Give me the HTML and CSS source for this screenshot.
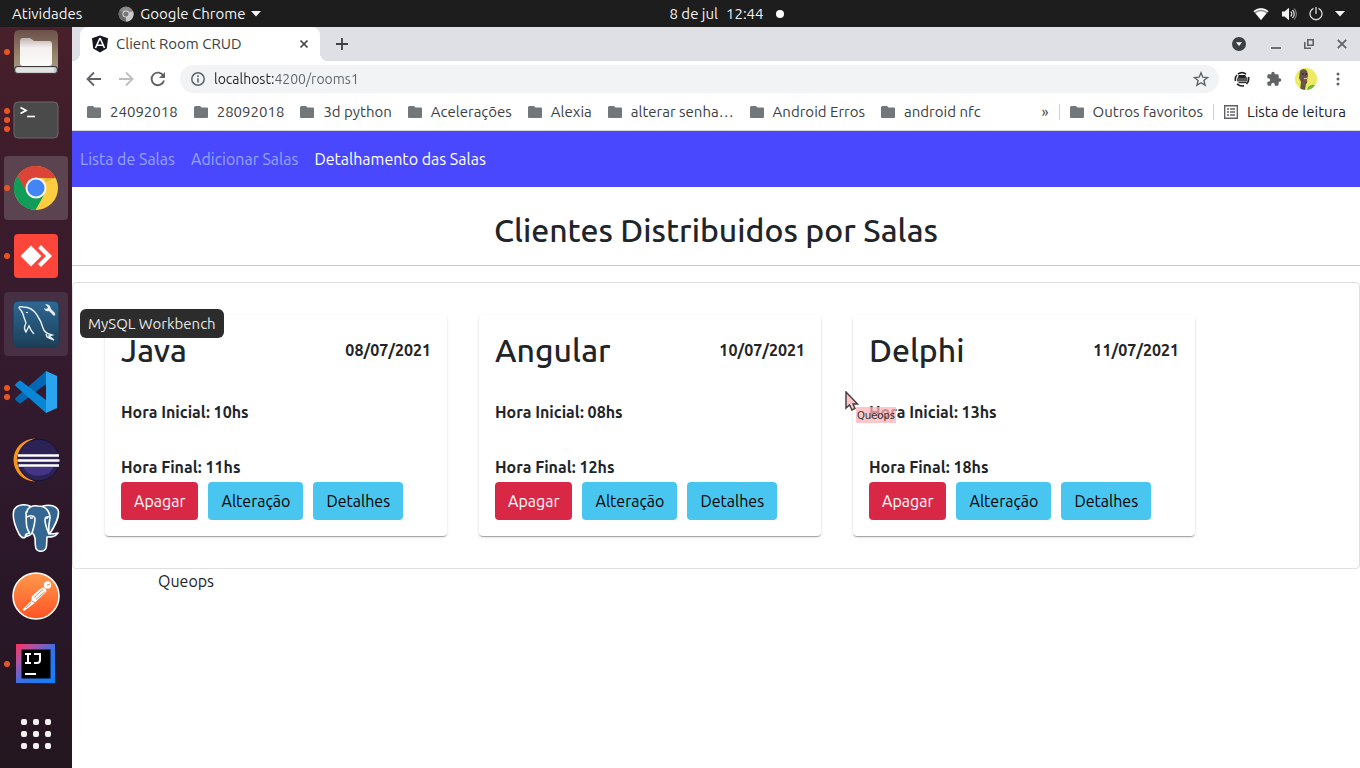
FILE: index.html
```html
<!DOCTYPE html>
<html lang="pt-BR">
<head>
<meta charset="utf-8">
<title>Client Room CRUD</title>
<link rel="stylesheet" href="styles.css">
</head>
<body>
<div class="desktop">
  <header class="topbar">
    <div class="topbar-left">
      <button class="bar-btn">Atividades</button>
      <button class="bar-btn app-menu">
        <svg width="16" height="16" viewBox="0 0 16 16"><circle cx="8" cy="8" r="7.5" fill="#8a8a8a"/><path d="M8 8 15 5A7.5 7.5 0 0 1 8 15.500z" fill="#c9c9c9"/><path d="M8 8 1.500 4.500A7.500 7.500 0 0 0 7.500 15.500z" fill="#6a6a6a"/><circle cx="8" cy="8" r="3.600" fill="#ddd"/><circle cx="8" cy="8" r="2.600" fill="#777"/></svg>
        Google Chrome
        <svg width="10" height="6" viewBox="0 0 10 6"><path d="M0 0h10L5 5.500z" fill="#f2f2f2"/></svg>
      </button>
    </div>
    <button class="bar-btn clock"><span>8 de jul</span><span>12:44</span><i class="clock-dot"></i></button>
    <button class="bar-btn tray" aria-label="Sistema">
      <svg width="16" height="14" viewBox="0 0 16 14"><path d="M.5 4.200C4.600.2 11.400.2 15.500 4.200L8 13z" fill="#8f8f8f"/><path d="M.5 4.200C4.600.2 11.400.2 15.500 4.200l-.8 1C10.800 1.800 5.200 1.800 1.300 5.200z" fill="#fff"/><path d="M2.600 6.200C5.600 3.500 10.400 3.500 13.400 6.200L8 13z" fill="#fff"/></svg>
      <svg width="16" height="14" viewBox="0 0 16 14"><path d="M1 4.500h2.500L8 .8v12.400L3.500 9.500H1z" fill="#f2f2f2"/><path d="M9.800 4.500q2 2.500 0 5M11.500 2.800q3.400 4.200 0 8.400" fill="none" stroke="#e0e0e0" stroke-width="1.200"/><path d="M13.200 1.500q4.400 5.500 0 11" fill="none" stroke="#888" stroke-width="1.100"/></svg>
      <svg width="14" height="14" viewBox="0 0 14 14"><path d="M4.500 1.300a6 6 0 1 0 5 0M7 0v7" fill="none" stroke="#d8d8d8" stroke-width="1.300"/></svg>
      <svg width="10" height="6" viewBox="0 0 10 6"><path d="M0 0h10L5 5.500z" fill="#f2f2f2"/></svg>
    </button>
  </header>

  <div class="workspace">
    <nav class="dock" aria-label="Dock">
      <button class="dock-item" aria-label="Arquivos"><span class="dots"><i></i></span>
        <svg width="48" height="48" viewBox="0 0 48 48"><defs><linearGradient id="fg" x1="0" y1="0" x2="0" y2="1"><stop offset="0" stop-color="#6b5049"/><stop offset=".6" stop-color="#98866f"/><stop offset="1" stop-color="#aaa085"/></linearGradient><linearGradient id="ff" x1="0" y1="0" x2="0" y2="1"><stop offset="0" stop-color="#bfb2b0"/><stop offset=".35" stop-color="#f4f1f0"/><stop offset="1" stop-color="#fbfbfa"/></linearGradient></defs><rect x="2" y="2" width="44" height="44" rx="5" fill="url(#fg)"/><path d="M8 13q0-3 3-3h7l4 3h15q3 0 3 3v19q0 3-3 3H11q-3 0-3-3z" fill="url(#ff)"/><rect x="2.500" y="38.500" width="43" height="7" rx="3.500" fill="#c9c9c9" stroke="#3c3837" stroke-width="1.200"/><rect x="4" y="39.500" width="38" height="4.500" rx="2" fill="#e2e2e2"/></svg></button>
      <button class="dock-item" aria-label="Terminal"><span class="dots"><i></i><i></i><i></i></span>
        <svg width="48" height="48" viewBox="0 0 48 48"><rect x="2" y="6" width="44" height="36" rx="4" fill="#4a4a4a" stroke="#6d6768"/><path d="M8.500 11.500 14 14.500 8.500 17.500" fill="none" stroke="#fff" stroke-width="1.800"/><path d="M15 20.500h8" stroke="#fff" stroke-width="1.600"/></svg></button>
      <button class="dock-item active" aria-label="Google Chrome"><span class="dots"><i></i></span>
        <svg width="48" height="48" viewBox="0 0 48 48"><circle cx="24" cy="24" r="22" fill="#ffcd40"/><path d="M24 24 5.500 12A22 22 0 0 0 23.500 46L32 31z" fill="#0f9d58"/><path d="M24 14H43.700A22 22 0 0 0 5.500 12L15 28.500z" fill="#db4437"/><path d="M32 14h11.700L34 18z" fill="#c98a2c" opacity=".4"/><circle cx="24" cy="24" r="10.500" fill="#f4f4f4"/><circle cx="24" cy="24" r="8.500" fill="#4285f4"/></svg></button>
      <button class="dock-item" aria-label="AnyDesk"><span class="dots"><i></i></span>
        <svg width="48" height="48" viewBox="0 0 48 48"><rect x="2" y="2" width="44" height="44" rx="4" fill="#fd453a"/><path d="M19 13.500 29.500 24 19 34.500 8.500 24z" fill="#fff"/><path d="M26 16 29 13 40 24 29 35l-3-3 8-8z" fill="#fff"/></svg></button>
      <button class="dock-item hover" aria-label="MySQL Workbench" aria-describedby="dock-tip"><span class="dots"></span>
        <svg width="48" height="48" viewBox="0 0 48 48"><defs><linearGradient id="mg" x1="0" y1="0" x2="0" y2="1"><stop offset="0" stop-color="#2f6896"/><stop offset="1" stop-color="#1c4058"/></linearGradient></defs><rect x="1" y="1" width="46" height="46" rx="5" fill="url(#mg)" stroke="#1b3a55"/><path d="M7 8q0-2 4-1c6 0 11 3 14 8 4 6 5 9 6 13 1 4 5 6 9 7l-3 1 5 4-7-3-1-3M7 8q3 3 4 6c1 4 2 6 3 9q-3 5 0 9l3-6q2 5 5 8" fill="none" stroke="#e9f1f6" stroke-width="1.400"/><path d="M14 12.500h2" stroke="#e9f1f6"/><path d="M33 4.500q3-1 5 1.500l1 3 4 4q1 2-1 3l-5-5q-4 1-5-3l2 1 2-1-1-2z" fill="#e8eef2"/></svg>
        <span class="tooltip" id="dock-tip" role="tooltip">MySQL Workbench</span></button>
      <button class="dock-item" aria-label="Visual Studio Code"><span class="dots"><i></i><i></i></span>
        <svg width="48" height="48" viewBox="0 0 48 48"><path d="M34 3 45 8v32l-11 5z" fill="#2aa6f1"/><path d="M34 3v13L9 35q-1 1-2 0l-3.500-3q-1-1 0-2z" fill="#0268b4"/><path d="M34 45V32L9 13q-1-1-2 0l-3.500 3q-1 1 0 2z" fill="#0a86d6"/></svg></button>
      <button class="dock-item" aria-label="Eclipse"><span class="dots"></span>
        <svg width="48" height="48" viewBox="0 0 48 48"><path d="M23 2.500A21.500 21.500 0 1 0 23 45.500 23 23 0 0 1 23 2.500z" fill="#f7941e"/><circle cx="26.500" cy="24" r="20.800" fill="#2c2255" stroke="#171335"/><path d="M11 31a17 15 0 0 0 31 0z" fill="#453384"/><path d="M6 19.500h41M5.500 24.500h42M6.500 29.500h40.500" stroke="#fff" stroke-width="2.400"/></svg></button>
      <button class="dock-item" aria-label="PostgreSQL"><span class="dots"></span>
        <svg width="48" height="48" viewBox="0 0 48 48"><g fill="#336791" stroke="#fff" stroke-width="1.600" stroke-linejoin="round"><path d="M16 30c-3 5-6 5-9 0C3 22 0 12 2 6 5 0 13 0 18 2L20 26z"/><path d="M31 2c7-2 13 0 15 4 2 5-3 16-9 25l-4 2z"/><path d="M15 8c0-4 5-7 11-6 7 0 11 4 12 11 0 4-2 7-1 17q5 0 9-1c-3 4-6 4-11 4l-.500 9c-.500 7-11 7-11 0-1-5 1-9-3-13-5 5-9 3-6 1l3-1c-4-6-3-10-3.500-21z"/><path d="M15 13q6-3 8 1c0 5-1 9-3 15M38 13q-5-1-5 3c0 5 2 9 4 14" fill="none"/></g><path d="M18 14h3M34 14h2" stroke="#fff" stroke-width="1.600"/></svg></button>
      <button class="dock-item" aria-label="Postman"><span class="dots"></span>
        <svg width="48" height="48" viewBox="0 0 48 48"><defs><linearGradient id="pg" x1="0" y1="0" x2="0" y2="1"><stop offset="0" stop-color="#ff9a4d"/><stop offset="1" stop-color="#ff5324"/></linearGradient></defs><circle cx="24" cy="24" r="23" fill="url(#pg)" stroke="#fff" stroke-width="1.600"/><circle cx="35.500" cy="13" r="3.700" fill="#fff"/><path d="m35 13 3-1" stroke="#ff8a45" stroke-width="1.300"/><path d="M20 24 30 15.500q4 0 4.500 4L22 31.500 12 39l-1.500-1.500L19 29z" fill="#fff"/><path d="m22 25.500 9-8M24 27.500l9-8M19 29l4 1.500M14 36l5-5" stroke="#ff7a3c" stroke-width=".9" fill="none"/></svg></button>
      <button class="dock-item" aria-label="IntelliJ IDEA"><span class="dots"><i></i></span>
        <svg width="48" height="48" viewBox="0 0 48 48"><defs><linearGradient id="ig" x1="0" y1="0" x2="1" y2="1"><stop offset="0" stop-color="#fe315d"/><stop offset=".25" stop-color="#b052a0"/><stop offset=".55" stop-color="#3571e8"/><stop offset="1" stop-color="#0a84ff"/></linearGradient></defs><rect x="4" y="4" width="39" height="39" fill="url(#ig)"/><rect x="9.500" y="9.500" width="29" height="29" fill="#000"/><path d="M13 14h6M13 23h6M16 14v9M22 14h6v6q0 3-3 3h-3M13 34h11" fill="none" stroke="#fff" stroke-width="2"/></svg></button>
      <button class="dock-item apps" aria-label="Mostrar aplicativos"><span class="dots"></span>
        <svg width="48" height="48" viewBox="0 0 48 48" fill="#f2f0f0"><rect x="9" y="9" width="6" height="6" rx="2"/><rect x="21" y="9" width="6" height="6" rx="2"/><rect x="33" y="9" width="6" height="6" rx="2"/><rect x="9" y="21" width="6" height="6" rx="2"/><rect x="21" y="21" width="6" height="6" rx="2"/><rect x="33" y="21" width="6" height="6" rx="2"/><rect x="9" y="33" width="6" height="6" rx="2"/><rect x="21" y="33" width="6" height="6" rx="2"/><rect x="33" y="33" width="6" height="6" rx="2"/></svg></button>
    </nav>

    <div class="browser">
      <div class="tabstrip">
        <div class="tab">
          <svg width="18" height="18" viewBox="0 0 18 18"><path d="M9 .5 17 3.200 15.800 13.500 9 17.500 2.200 13.500 1 3.200z" fill="#15171f"/><path d="M9 3 4.500 13M9 3l4.500 10M6.200 10.300h5.600" fill="none" stroke="#fff" stroke-width="1.600"/></svg>
          <span class="tab-title">Client Room CRUD</span>
          <button class="icon-btn" aria-label="Fechar guia"><svg width="10" height="10" viewBox="0 0 10 10"><path d="m1.500 1.500 7 7m0-7-7 7" stroke="#3c4043" stroke-width="1.600"/></svg></button>
        </div>
        <button class="icon-btn new-tab" aria-label="Nova guia"><svg width="12" height="12" viewBox="0 0 12 12"><path d="M6 0v12M0 6h12" stroke="#3c4043" stroke-width="1.800"/></svg></button>
        <div class="window-controls">
          <button class="icon-btn tab-search" aria-label="Pesquisar guias"><svg width="14" height="14" viewBox="0 0 14 14"><circle cx="7" cy="7" r="7" fill="#3c4043"/><path d="M4 5.200h6L7 9z" fill="#fff"/></svg></button>
          <button class="icon-btn" aria-label="Minimizar"><svg width="10" height="12" viewBox="0 0 10 12"><path d="M0 10h10" stroke="#5f6368" stroke-width="1.800"/></svg></button>
          <button class="icon-btn" aria-label="Restaurar"><svg width="10" height="10" viewBox="0 0 10 10"><path d="M3.800.8h5.400v5.400H3.800zM.8 3v6.200H7" fill="none" stroke="#5f6368" stroke-width="1.600"/></svg></button>
          <button class="icon-btn" aria-label="Fechar"><svg width="10" height="10" viewBox="0 0 10 10"><path d="m.8.8 8.400 8.400m0-8.400L.8 9.200" stroke="#5f6368" stroke-width="1.800"/></svg></button>
        </div>
      </div>

      <div class="toolbar">
        <div class="history">
          <button class="icon-btn" aria-label="Voltar"><svg width="16" height="16" viewBox="0 0 16 16"><path d="M15 8H2m6-6.500L1.500 8 8 14.500" fill="none" stroke="#5f6368" stroke-width="1.800"/></svg></button>
          <button class="icon-btn" aria-label="Avançar"><svg width="16" height="16" viewBox="0 0 16 16"><path d="M1 8h13M8 1.500 14.500 8 8 14.500" fill="none" stroke="#bcbec1" stroke-width="1.800"/></svg></button>
          <button class="icon-btn" aria-label="Recarregar"><svg width="16" height="16" viewBox="0 0 16 16"><path d="M13.500 5A6.300 6.300 0 1 0 14 9.500" fill="none" stroke="#5f6368" stroke-width="1.900"/><path d="M15 1v6H9z" fill="#5f6368"/></svg></button>
        </div>
        <div class="omnibox">
          <svg width="14" height="14" viewBox="0 0 14 14"><circle cx="7" cy="7" r="6.200" fill="none" stroke="#5f6368" stroke-width="1.500"/><path d="M7 6.200v4.300M7 3.300V5" stroke="#5f6368" stroke-width="1.600"/></svg>
          <input class="url" type="text" value="localhost:4200/rooms1" aria-label="Endereço">
          <button class="icon-btn" aria-label="Favoritar"><svg width="16" height="16" viewBox="0 0 16 16"><path d="m8 1.800 1.800 4.400 4.700.3-3.600 3 1.200 4.700L8 11.700l-4.100 2.500 1.200-4.700-3.600-3 4.700-.3z" fill="none" stroke="#5f6368" stroke-width="1.400"/></svg></button>
        </div>
        <div class="extensions">
          <button class="icon-btn" aria-label="Extensão"><svg width="16" height="16" viewBox="0 0 16 16"><path d="M4 3Q8 .2 12 3M14.500 6q1 4-2 7M10 14.800q-4 .8-7-2M1.500 10Q.8 6 3 4" fill="none" stroke="#222" stroke-width="1.600"/><path d="M3 7.500 5 5h6.500L13.500 7v3.500H3z" fill="#55585b"/><path d="M4.500 4h7v3h-7z" fill="#222"/><path d="M4.500 11.500h8" stroke="#333" stroke-width="1.400"/></svg></button>
          <button class="icon-btn" aria-label="Extensões"><svg width="16" height="16" viewBox="0 0 24 24"><path d="M20.500 11H19V7a2 2 0 0 0-2-2h-4V3.500a2.500 2.500 0 0 0-5 0V5H4a2 2 0 0 0-2 2v3.800h1.500a2.700 2.700 0 0 1 0 5.400H2V20a2 2 0 0 0 2 2h3.800v-1.500a2.700 2.700 0 0 1 5.400 0V22H17a2 2 0 0 0 2-2v-4h1.500a2.500 2.500 0 0 0 0-5z" fill="#5f6368"/></svg></button>
          <button class="icon-btn" aria-label="Perfil"><svg width="22" height="22" viewBox="0 0 22 22"><defs><clipPath id="av"><circle cx="11" cy="11" r="11"/></clipPath></defs><g clip-path="url(#av)"><path d="M0 0h22v22H0z" fill="#eeea62"/><path d="M13 19q4-4 9-1v4H12z" fill="#6cbd3c"/><path d="M5 3q4-4 7 0l1 4-1 5q1 3-1 4l-1 6H5l1-8-2-4z" fill="#65564a"/><path d="M7 6h1.500M10.500 6H12" stroke="#2d211c" stroke-width="1.600"/><path d="M9 10.500h3" stroke="#e6c8b8"/><path d="M9 12h3" stroke="#b44c43"/></g></svg></button>
          <button class="icon-btn" aria-label="Menu"><svg width="4" height="14" viewBox="0 0 4 14" fill="#5f6368"><circle cx="2" cy="2" r="1.500"/><circle cx="2" cy="7" r="1.500"/><circle cx="2" cy="12" r="1.500"/></svg></button>
        </div>
      </div>

      <svg class="defs" width="0" height="0"><symbol id="folder" viewBox="0 0 14 12"><path d="M0 1.500Q0 0 1.500 0H6l1.500 1.500H13q1 0 1 1V11q0 1-1 1H1q-1 0-1-1z" fill="#72777b"/></symbol></svg>
      <div class="bookmarks">
        <div class="bookmark-list">
          <a class="bookmark" href="#"><svg width="14" height="12"><use href="#folder"/></svg>24092018</a>
          <a class="bookmark" href="#"><svg width="14" height="12"><use href="#folder"/></svg>28092018</a>
          <a class="bookmark" href="#"><svg width="14" height="12"><use href="#folder"/></svg>3d python</a>
          <a class="bookmark" href="#"><svg width="14" height="12"><use href="#folder"/></svg>Acelerações</a>
          <a class="bookmark" href="#"><svg width="14" height="12"><use href="#folder"/></svg>Alexia</a>
          <a class="bookmark" href="#"><svg width="14" height="12"><use href="#folder"/></svg>alterar senha…</a>
          <a class="bookmark" href="#"><svg width="14" height="12"><use href="#folder"/></svg>Android Erros</a>
          <a class="bookmark" href="#"><svg width="14" height="12"><use href="#folder"/></svg>android nfc</a>
        </div>
        <button class="icon-btn more">»</button>
        <div class="bookmark-side"><a class="bookmark" href="#"><svg width="14" height="12"><use href="#folder"/></svg>Outros favoritos</a></div>
        <div class="bookmark-side"><button class="bookmark reading"><svg width="14" height="14" viewBox="0 0 14 14"><path d="M.7.7h12.600v12.600H.7z" fill="none" stroke="#5f6368" stroke-width="1.400"/><path d="M3 4h2m1 0h5M3 7h2m1 0h5M3 10h2m1 0h5" stroke="#5f6368" stroke-width="1.400"/></svg>Lista de leitura</button></div>
      </div>

      <div class="page">
        <nav class="navbar">
          <a class="nav-link" href="#">Lista de Salas</a>
          <a class="nav-link" href="#">Adicionar Salas</a>
          <a class="nav-link current" href="#" aria-current="page">Detalhamento das Salas</a>
        </nav>
        <h1 class="page-title">Clientes Distribuidos por Salas</h1>
        <main class="room-panel">
          <article class="room">
            <header class="room-head"><h2>Java</h2><strong>08/07/2021</strong></header>
            <strong class="hour">Hora Inicial: 10hs</strong>
            <strong class="hour">Hora Final: 11hs</strong>
            <div class="actions"><button class="btn danger">Apagar</button><button class="btn info">Alteração</button><button class="btn info">Detalhes</button></div>
          </article>
          <article class="room">
            <header class="room-head"><h2>Angular</h2><strong>10/07/2021</strong></header>
            <strong class="hour">Hora Inicial: 08hs</strong>
            <strong class="hour">Hora Final: 12hs</strong>
            <div class="actions"><button class="btn danger">Apagar</button><button class="btn info">Alteração</button><button class="btn info">Detalhes</button></div>
          </article>
          <article class="room">
            <header class="room-head"><h2>Delphi</h2><strong>11/07/2021</strong></header>
            <strong class="hour">Hora Inicial: 13hs</strong>
            <strong class="hour">Hora Final: 18hs</strong>
            <div class="actions"><button class="btn danger">Apagar</button><button class="btn info">Alteração</button><button class="btn info">Detalhes</button></div>
            <div class="remote-pointer">
              <svg width="14" height="20" viewBox="0 0 14 20"><path d="M1 1v16l3.500-3 2.500 5 3-1.500L8 13h4.500z" fill="#ffc7ca" stroke="#444" stroke-width="1.500"/></svg>
              <span>Queops</span>
            </div>
          </article>
        </main>
        <p class="client">Queops</p>
      </div>
    </div>
  </div>
</div>
</body>
</html>
```
FILE: styles.css
```css
*, *::before, *::after { box-sizing: border-box; }
body {
  margin: 0;
  font-family: Ubuntu, "Noto Sans", "Open Sans", sans-serif;
  font-size: 16px;
  line-height: 24px;
  color: #212529;
}
button { font: inherit; color: inherit; border: 0; background: none; padding: 0; margin: 0; cursor: pointer; }
a { color: inherit; text-decoration: none; }
svg { display: block; flex: none; }
.desktop { display: flex; flex-direction: column; height: 100vh; overflow: hidden; background: #fff; }
.defs { position: absolute; }

/* System bar */
.topbar {
  display: grid; grid-template-columns: 1fr auto 1fr; align-items: center;
  height: 27px; flex: none; padding: 0 15px 0 12px;
  background: #1d1d1d; color: #f2f2f2; font-size: 15px; line-height: 20px;
}
.topbar-left { display: flex; gap: 36px; }
.bar-btn { display: flex; align-items: center; gap: 6px; white-space: nowrap; }
.clock { gap: 8px; margin-left: 96px; }
.clock-dot { width: 8px; height: 8px; margin-left: 4px; border-radius: 50%; background: #fff; }
.tray { justify-self: end; gap: 12px; }

/* Dock */
.workspace { display: flex; flex: 1; min-height: 0; }
.dock {
  display: flex; flex-direction: column; justify-content: flex-end; align-items: center; gap: 4px;
  width: 72px; flex: none; padding-bottom: 2px;
  background: linear-gradient(#47202a, #3d1c2b 20%, #331a2e 50%, #291728 75%, #24161f);
  clip-path: inset(0 -200px 0 0);
  z-index: 1;
}
.dock-item {
  position: relative; flex: none; width: 64px; height: 64px; border-radius: 4px;
  display: flex; align-items: center; justify-content: center;
}
.dock-item.active { background: #5b4450; }
.dock-item.hover { background: #483044; }
.dock-item.apps { margin-top: 2px; }
.dots { position: absolute; left: 0; top: 0; bottom: 0; display: flex; flex-direction: column; justify-content: center; gap: 3px; }
.dots i { width: 6px; height: 6px; border-radius: 50%; background: #e95420; }
.tooltip {
  position: absolute; left: 76px; top: 17px; padding: 4px 8px; border-radius: 6px;
  background: #2c2c2c; color: #e6e6e6; font-size: 15px; line-height: 21px; white-space: nowrap;
}

/* Browser window */
.browser { display: flex; flex-direction: column; flex: 1; min-width: 0; }
.icon-btn { display: flex; align-items: center; justify-content: center; }
.tabstrip { display: flex; align-items: center; height: 34px; flex: none; padding: 0 13px 0 8px; background: #dee0e6; color: #3c4043; }
.tab {
  position: relative; display: flex; align-items: center; gap: 7px;
  width: 240px; height: 34px; padding: 0 11px; border-radius: 8px 8px 0 0;
  background: #fff; font-size: 15px;
}
.tab::before, .tab::after { content: ""; position: absolute; bottom: 0; width: 8px; height: 8px; }
.tab::before { right: 100%; background: radial-gradient(circle at 0 0, transparent 8px, #fff 8px); }
.tab::after { left: 100%; background: radial-gradient(circle at 100% 0, transparent 8px, #fff 8px); }
.tab-title { flex: 1; }
.new-tab { margin-left: 16px; }
.window-controls { display: flex; align-items: center; gap: 23px; margin-left: auto; }
.tab-search { margin-right: 2px; }
.toolbar { display: flex; align-items: center; gap: 12px; height: 36px; flex: none; padding: 0 11px 0 14px; }
.history { display: flex; gap: 16px; margin-right: 2px; }
.omnibox { display: flex; align-items: center; gap: 9px; flex: 1; height: 28px; padding: 0 10px 0 11px; border-radius: 14px; background: #f1f3f4; }
.url {
  flex: 1; min-width: 0; border: 0; padding: 0; outline: 0; font: inherit; font-size: 14px;
  color: #5f6368; -webkit-text-fill-color: transparent;
  background: linear-gradient(90deg, #202124 60px, #5f6368 60px); -webkit-background-clip: text; background-clip: text;
}
.extensions { display: flex; align-items: center; gap: 10px; }
.extensions .icon-btn { width: 22px; }
.bookmarks { display: flex; align-items: center; height: 34px; flex: none; padding: 0 14px 4px 15px; border-bottom: 1px solid #d5d7da; color: #3c4043; font-size: 15px; line-height: 20px; }
.bookmark-list { display: flex; flex: 1; gap: 16px; overflow: hidden; min-width: 0; }
.bookmark { display: flex; align-items: center; gap: 9px; white-space: nowrap; }
.more { padding: 0 10px; }
.bookmark-side { border-left: 1px solid #cfd1d4; padding: 0 10px; height: 16px; display: flex; align-items: center; }
.bookmark-side:last-child { padding-right: 0; }
.reading { color: #202124; }

/* Application page */
.page { flex: 1; min-height: 0; background: #fff; }
.navbar { display: flex; align-items: center; height: 56px; background: #4a48ff; }
.nav-link { padding: 8px; color: #94a4ff; }
.nav-link.current { color: #fff; }
.page-title { margin: 0; padding: 24px 0 16px; border-bottom: 1px solid #c8c9ca; text-align: center; }
.page-title, .room-head h2 { font-family: "Ubuntu Medium", Ubuntu, "Noto Sans", sans-serif; font-size: 32px; line-height: 38px; font-weight: 500; }
.room-panel { display: flex; flex-wrap: wrap; gap: 32px; margin-top: 16px; padding: 32px; border: 1px solid #dfdfdf; border-radius: 4px; }
.room {
  position: relative; display: flex; flex-direction: column; width: 342px; padding: 16px; border-radius: 4px;
  box-shadow: 0 2px 1px -1px rgba(0,0,0,.2), 0 1px 1px 0 rgba(0,0,0,.14), 0 1px 3px 0 rgba(0,0,0,.12);
}
.room-head { display: flex; justify-content: space-between; align-items: center; }
.room-head h2 { margin: 0; }
.hour { margin-top: 31px; }
.actions { display: flex; gap: 10px; margin-top: 3px; }
.btn { padding: 6px 12px; border: 1px solid transparent; border-radius: 4px; }
.danger { background: #d92846; color: #fff; }
.info { background: #49c6f0; color: #000; }
.client { margin: 0; padding-left: 86px; }
.remote-pointer { position: absolute; left: -8px; top: 76px; }
.remote-pointer span {
  position: absolute; left: 11px; top: 16px; padding: 3px 1px 1px; background: rgba(255,180,184,.75);
  font-family: "DejaVu Sans", sans-serif; font-size: 10px; line-height: 12px; color: #333;
}
```
